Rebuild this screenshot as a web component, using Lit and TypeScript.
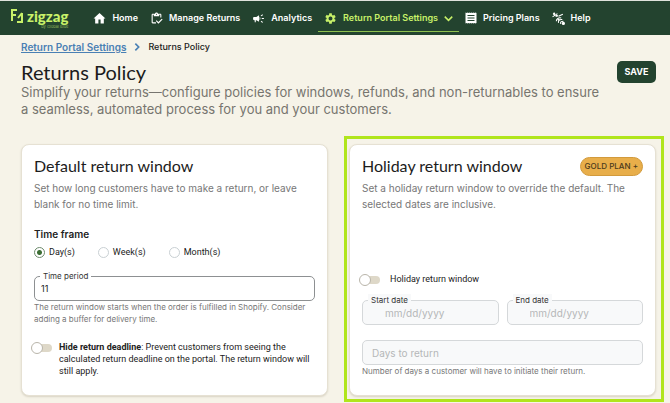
import { LitElement, html, css, svg } from "lit";
import { customElement } from "lit/decorators.js";
import { classMap } from "lit/directives/class-map.js";

const icons = {
  home: svg`<path fill="currentColor" d="M10 21v-7h4v7h6v-9h3L12 2 1 12h3v9z"/>`,
  returns: svg`<path fill="currentColor" d="M5 5h2v3h10V5h2v5h2V5c0-1.1-.9-2-2-2h-4.18C14.4 1.84 13.3 1 12 1s-2.4.84-2.82 2H5c-1.1 0-2 .9-2 2v14c0 1.1.9 2 2 2h6v-2H5V5zm7-2c.55 0 1 .45 1 1s-.45 1-1 1-1-.45-1-1 .45-1 1-1z"/><path fill="currentColor" d="M21.75 12.25 15.51 18.5 12.25 15.25 10.75 16.75 15.51 21.5 23.25 13.75z"/>`,
  analytics: svg`<path fill="currentColor" d="M18 11v2h4v-2h-4zm-2 6.61c.96.71 2.21 1.65 3.2 2.39.4-.53.8-1.07 1.2-1.6-.99-.74-2.24-1.68-3.2-2.4-.4.54-.8 1.08-1.2 1.61zM20.4 5.6c-.4-.53-.8-1.07-1.2-1.6-.99.74-2.24 1.68-3.2 2.4.4.53.8 1.07 1.2 1.6.96-.72 2.21-1.65 3.2-2.4zM4 9c-1.1 0-2 .9-2 2v2c0 1.1.9 2 2 2h1v4h2v-4h1l5 3V6L8 9H4zm11.5 3c0-1.33-.58-2.53-1.5-3.35v6.69c.92-.81 1.5-2.01 1.5-3.34z"/>`,
  settings: svg`<path fill="currentColor" d="M19.14 12.94c.04-.3.06-.61.06-.94 0-.32-.02-.64-.07-.94l2.03-1.58c.18-.14.23-.41.12-.61l-1.92-3.32c-.12-.22-.37-.29-.59-.22l-2.39.96c-.5-.38-1.03-.7-1.62-.94l-.36-2.54c-.04-.24-.24-.41-.48-.41h-3.84c-.24 0-.43.17-.47.41l-.36 2.54c-.59.24-1.13.57-1.62.94l-2.39-.96c-.22-.08-.47 0-.59.22L2.74 8.87c-.12.21-.08.47.12.61l2.03 1.58c-.05.3-.09.63-.09.94s.02.64.07.94l-2.03 1.58c-.18.14-.23.41-.12.61l1.92 3.32c.12.22.37.29.59.22l2.39-.96c.5.38 1.03.7 1.62.94l.36 2.54c.05.24.24.41.48.41h3.84c.24 0 .44-.17.47-.41l.36-2.54c.59-.24 1.13-.56 1.62-.94l2.39.96c.22.08.47 0 .59-.22l1.92-3.32c.12-.22.07-.47-.12-.61l-2.01-1.58zM12 15.6c-1.98 0-3.6-1.62-3.6-3.6s1.62-3.6 3.6-3.6 3.6 1.62 3.6 3.6-1.62 3.6-3.6 3.6z"/>`,
  plans: svg`<path fill="currentColor" fill-rule="evenodd" d="M1 1l2 1 2-1 2 1 2-1 2 1 2-1 2 1 2-1 2 1 2-1 2 1v20l-2 1-2-1-2 1-2-1-2 1-2-1-2 1-2-1-2 1-2-1-2 1zM5 6v2h14V6zm0 5v2h14v-2zm0 5v2h14v-2z"/>`,
  help: svg`<g fill="none" stroke="currentColor" stroke-width="2"><path d="M1 9l9-6M2 3l6 5M12 8l8-4"/><path d="M8 17c0-5 4-7 9-6M12 20c-1-4 2-7 7-6M16 22c-1-3 1-5 5-5"/></g><circle cx="4" cy="3" r="2" fill="currentColor"/><circle cx="9" cy="7" r="2" fill="currentColor"/><circle cx="12" cy="14" r="2" fill="currentColor"/><circle cx="21" cy="21" r="3" fill="currentColor"/>`,
  down: svg`<path fill="none" stroke="currentColor" stroke-width="4" d="M2 7l10 10L22 7"/>`,
  right: svg`<path fill="none" stroke="currentColor" stroke-width="5" d="M7 2l10 10L7 22"/>`,
};

type IconName = keyof typeof icons;

const icon = (name: IconName) =>
  html`<svg class="icon ${name}" viewBox="0 0 24 24" aria-hidden="true">${icons[name]}</svg>`;

@customElement("top-nav")
class TopNav extends LitElement {
  static styles = css`
    :host {
      display: block;
      background: #23432f;
      border-top: 1px solid #dfe3dc;
    }
    .bar {
      display: flex;
      align-items: center;
      height: 34px;
      padding-left: 11px;
    }
    .logo {
      display: flex;
      gap: 4px;
      margin-right: 19px;
      color: #c8f169;
      text-decoration: none;
    }
    .mark {
      width: 12px;
      height: 16px;
    }
    .word {
      display: flex;
      flex-direction: column;
      align-items: flex-end;
      font: 900 15px/16px Lato, sans-serif;
    }
    .by {
      font: 400 4px/5px Inter, sans-serif;
      color: #8fb45a;
    }
    .links {
      display: flex;
      align-items: center;
    }
    .link {
      display: flex;
      align-items: center;
      gap: 6px;
      height: 26px;
      padding: 0 6px;
      margin-top: 1px;
      border-bottom: 1px solid transparent;
      color: #fff;
      font: 600 9px/12px Inter, sans-serif;
      text-decoration: none;
      white-space: nowrap;
    }
    .active {
      color: #c8f169;
      border-bottom-color: #8fc04f;
    }
    .icon {
      width: 13px;
      height: 13px;
      flex: none;
    }
    .plans {
      width: 12px;
      height: 12px;
    }
    .down {
      width: 9px;
      height: 9px;
    }
  `;

  private items: { label: string; icon: IconName; active?: boolean }[] = [
    { label: "Home", icon: "home" },
    { label: "Manage Returns", icon: "returns" },
    { label: "Analytics", icon: "analytics" },
    { label: "Return Portal Settings", icon: "settings", active: true },
    { label: "Pricing Plans", icon: "plans" },
    { label: "Help", icon: "help" },
  ];

  render() {
    return html`
      <header class="bar">
        <a class="logo" href="#">
          <svg class="mark" viewBox="0 0 12 16" aria-hidden="true">
            <path
              d="M1 13V2h5M1 7h4M11 5v9H6M11 5L7 10"
              fill="none"
              stroke="currentColor"
              stroke-width="2"
            />
          </svg>
          <span class="word">zigzag<span class="by">by Global Blue</span></span>
        </a>
        <nav class="links">
          ${this.items.map(
            (i) => html`<a class=${classMap({ link: true, active: !!i.active })} href="#"
              >${icon(i.icon)}<span>${i.label}</span>${i.active ? icon("down") : ""}</a
            >`
          )}
        </nav>
      </header>
    `;
  }
}

@customElement("outlined-field")
class OutlinedField extends LitElement {
  static properties = {
    label: { type: String },
    value: { type: String },
    placeholder: { type: String },
    hint: { type: String },
    disabled: { type: Boolean },
    date: { type: Boolean },
  };
  declare label: string;
  declare value: string;
  declare placeholder: string;
  declare hint: string;
  declare disabled: boolean;
  declare date: boolean;

  static styles = css`
    :host {
      display: block;
      min-width: 0;
    }
    .box {
      position: relative;
    }
    .label {
      position: absolute;
      top: -6px;
      left: 6px;
      padding: 0 3px;
      background: #fff;
      color: #333;
      font: 400 8px/12px Inter, sans-serif;
    }
    .off .label {
      background: #f8f9fa;
    }
    .input {
      display: block;
      box-sizing: border-box;
      width: 100%;
      height: 25px;
      padding: 0 6px;
      border: 1px solid #8d9092;
      border-radius: 5px;
      background: #fff;
      color: #222;
      font: 400 9px/12px Inter, sans-serif;
    }
    .off .input {
      padding: 0 9px;
      border-color: #d5d8da;
      background: #f8f9fa;
      font-size: 10px;
    }
    .date .input {
      padding-left: 22px;
    }
    .input::placeholder {
      color: #b5b7b8;
      opacity: 1;
    }
    .hint {
      margin: 0;
      color: #777;
      font: 400 8px/12px Inter, sans-serif;
    }
  `;

  render() {
    return html`
      <div class=${classMap({ box: true, off: this.disabled, date: this.date })}>
        <input
          id="field"
          class="input"
          type="text"
          .value=${this.value ?? ""}
          placeholder=${this.placeholder ?? ""}
          aria-label=${this.label || this.placeholder}
          ?disabled=${this.disabled}
        />
        ${this.label ? html`<label class="label" for="field">${this.label}</label>` : ""}
      </div>
      ${this.hint ? html`<p class="hint">${this.hint}</p>` : ""}
    `;
  }
}

@customElement("app-root")
class AppRoot extends LitElement {
  static styles = css`
    :host {
      display: block;
      min-height: 100vh;
      background: #f6f3e8;
      color: #222;
      font: 400 9px/12px Roboto, sans-serif;
    }
    .page {
      padding: 6px 14px 7px 21px;
    }
    .crumbs {
      display: flex;
      align-items: center;
      gap: 7px;
      font: 500 9px/12px Inter, sans-serif;
    }
    .crumb {
      color: #4a80b4;
      font-weight: 600;
      font-size: 10px;
    }
    .icon {
      width: 8px;
      height: 8px;
      color: #4a80b4;
    }
    .top {
      display: flex;
      justify-content: space-between;
      align-items: flex-start;
      margin-top: 8px;
    }
    .title {
      margin: 0;
      font: 400 20px/23px Lato, sans-serif;
      color: #1c1c1c;
    }
    .lead {
      margin: 0;
      max-width: 580px;
      color: #77756f;
      font: 400 13px/17px Inter, sans-serif;
    }
    .save {
      flex: none;
      width: 39px;
      height: 22px;
      padding: 0;
      border: 0;
      border-radius: 5px;
      background: #23432f;
      color: #fff;
      font: 700 9px/12px Inter, sans-serif;
    }
    .cards {
      display: grid;
      grid-template-columns: 1fr 1fr;
      gap: 21px;
      margin-top: 26px;
    }
    .card {
      position: relative;
      display: flex;
      flex-direction: column;
      box-sizing: border-box;
      padding: 12px 12px 18px;
      border: 1px solid #e6e1d3;
      border-radius: 8px;
      background: #fff;
      box-shadow: 0 1px 2px #d8d3c4;
    }
    .highlight::after {
      content: "";
      position: absolute;
      inset: -9px -9px -7px -6px;
      border: 3px solid #b0e51c;
      pointer-events: none;
    }
    .heading {
      display: flex;
      justify-content: space-between;
      align-items: center;
      height: 18px;
    }
    .name {
      margin: 0;
      font: 400 16px/18px Lato, sans-serif;
      color: #1c1c1c;
    }
    .plan {
      height: 19px;
      padding: 0 4px;
      border: 1px solid #d29a3c;
      border-radius: 10px;
      background: #e8ae4a;
      color: #4b3a1c;
      font: 500 8px/14px Inter, sans-serif;
    }
    .about {
      margin: 5px 0 0;
      color: #777;
      font: 400 10px/16px Inter, sans-serif;
    }
    .group {
      margin: 15px 0 0;
      padding: 0;
      border: 0;
    }
    .legend {
      padding: 0;
      font: 600 10px/14px Inter, sans-serif;
    }
    .choices {
      display: flex;
      gap: 23px;
      margin: 5px 0 18px;
    }
    .choice {
      display: flex;
      align-items: center;
      gap: 4px;
    }
    .radio {
      appearance: none;
      box-sizing: border-box;
      width: 11px;
      height: 11px;
      margin: 0;
      border: 1px solid #c9d0d3;
      border-radius: 50%;
      background: #fff;
    }
    .radio:checked {
      border-color: #6d8a6c;
      background: radial-gradient(#3c6e34 2px, #fff 3px);
    }
    .toggle {
      display: flex;
      align-items: flex-start;
      gap: 7px;
    }
    .hide {
      margin: 16px -8px 0 0;
    }
    .switch {
      appearance: none;
      position: relative;
      flex: none;
      width: 18px;
      height: 8px;
      margin: 3px 0 0;
      border-radius: 4px;
      background: #ded8c8;
    }
    .switch::before {
      content: "";
      position: absolute;
      box-sizing: border-box;
      top: -2px;
      left: -3px;
      width: 12px;
      height: 12px;
      border: 1px solid #b9b5aa;
      border-radius: 50%;
      background: #fff;
    }
    .lower {
      margin-top: auto;
    }
    .lower .toggle {
      gap: 10px;
    }
    .dates {
      display: grid;
      grid-template-columns: 1fr 1fr;
      gap: 8px;
      margin: 15px 0;
    }
  `;

  render() {
    return html`
      <top-nav></top-nav>
      <main class="page">
        <nav class="crumbs">
          <a class="crumb" href="#">Return Portal Settings</a>${icon("right")}<span>Returns Policy</span>
        </nav>
        <div class="top">
          <div>
            <h1 class="title">Returns Policy</h1>
            <p class="lead">
              Simplify your returns—configure policies for windows, refunds, and non-returnables to
              ensure a seamless, automated process for you and your customers.
            </p>
          </div>
          <button class="save">SAVE</button>
        </div>
        <div class="cards">
          <section class="card">
            <div class="heading"><h2 class="name">Default return window</h2></div>
            <p class="about">
              Set how long customers have to make a return, or leave blank for no time limit.
            </p>
            <fieldset class="group">
              <legend class="legend">Time frame</legend>
              <div class="choices">
                ${["Day(s)", "Week(s)", "Month(s)"].map(
                  (unit, i) => html`<label class="choice"
                    ><input class="radio" type="radio" name="unit" ?checked=${i === 0} />${unit}</label
                  >`
                )}
              </div>
            </fieldset>
            <outlined-field
              label="Time period"
              value="11"
              hint="The return window starts when the order is fulfilled in Shopify. Consider adding a buffer for delivery time."
            ></outlined-field>
            <label class="toggle hide">
              <input class="switch" type="checkbox" role="switch" />
              <span
                ><b>Hide return deadline</b>: Prevent customers from seeing the calculated return
                deadline on the portal. The return window will still apply.</span
              >
            </label>
          </section>
          <section class="card highlight">
            <div class="heading">
              <h2 class="name">Holiday return window</h2>
              <button class="plan">GOLD PLAN +</button>
            </div>
            <p class="about">
              Set a holiday return window to override the default. The selected dates are inclusive.
            </p>
            <div class="lower">
              <label class="toggle">
                <input class="switch" type="checkbox" role="switch" />
                <span>Holiday return window</span>
              </label>
              <div class="dates">
                <outlined-field label="Start date" placeholder="mm/dd/yyyy" disabled date></outlined-field>
                <outlined-field label="End date" placeholder="mm/dd/yyyy" disabled date></outlined-field>
              </div>
              <outlined-field
                placeholder="Days to return"
                hint="Number of days a customer will have to initiate their return."
                disabled
              ></outlined-field>
            </div>
          </section>
        </div>
      </main>
    `;
  }
}
